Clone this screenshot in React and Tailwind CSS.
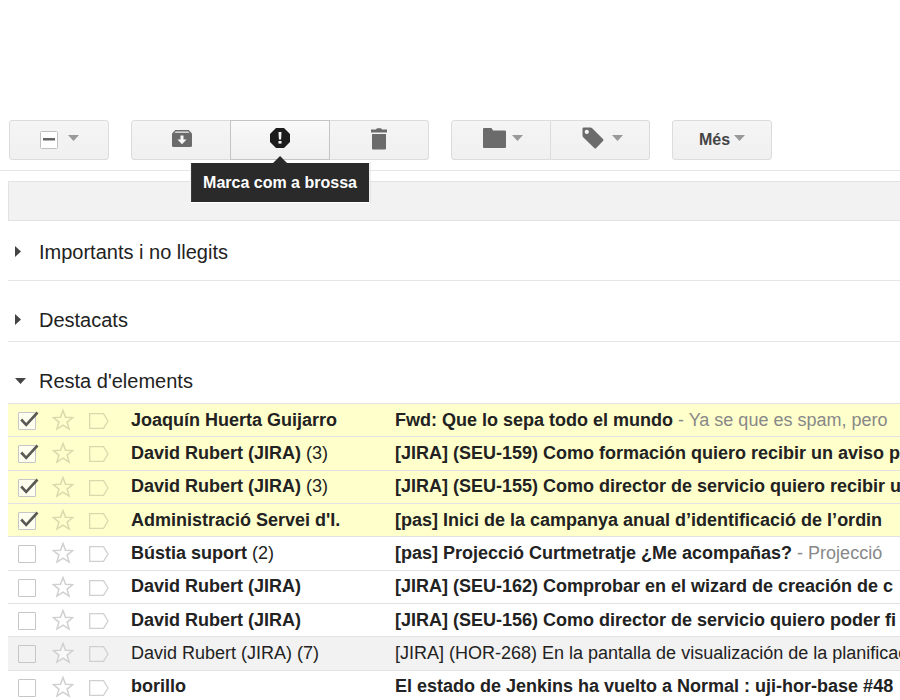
import React, { useState } from "react";

const BUTTON =
  "flex h-10 items-center justify-center border border-[#dcdcdc] bg-linear-to-b from-[#f5f5f5] to-[#f0f0f0] text-[#444]";

function Caret() {
  return (
    <svg width="11" height="6" viewBox="0 0 11 6" className="shrink-0" aria-hidden="true">
      <path d="M0 0h11L5.500 6z" fill="#999" />
    </svg>
  );
}

function ArchiveIcon() {
  return (
    <svg width="20" height="18" viewBox="0 0 20 18" aria-hidden="true">
      <path d="M3.200 0h13.600L20 3.400V15.500q0 1.500-1.500 1.500H1.500Q0 17 0 15.500V3.400z" fill="#6b6b6b" />
      <path d="M3.600 1.500h12.800l1.100 1.300H2.500z" fill="#f3f3f3" />
      <path d="M8.500 5.500h3V9.500h3L10 14.200 5.500 9.500h3z" fill="#f8f8f8" />
    </svg>
  );
}

function SpamIcon() {
  return (
    <svg width="20" height="20" viewBox="0 0 20 20" aria-hidden="true">
      <path d="M6 0h8l6 6v8l-6 6H6l-6-6V6z" fill="#1c1c1c" />
      <path d="M8.500 4h3l-.4 7.500H8.900z" fill="#f3f3f3" />
      <rect x="8.500" y="13" width="3" height="2.600" fill="#f3f3f3" />
    </svg>
  );
}

function TrashIcon() {
  return (
    <svg width="18" height="22" viewBox="0 0 18 22" aria-hidden="true">
      <path d="M1 1.500h5L7 .3h4l1 1.200h5V4.500H1z" fill="#6b6b6b" />
      <path d="M2 6h14v14.200q0 1.300-1.300 1.300H3.300Q2 21.500 2 20.200z" fill="#6b6b6b" />
    </svg>
  );
}

function FolderIcon() {
  return (
    <svg width="23" height="20" viewBox="0 0 23 20" aria-hidden="true">
      <path d="M1 0H8.500l1.500 2.500h12Q23 2.500 23 3.500v15.500q0 1-1 1H1q-1 0-1-1V1Q0 0 1 0z" fill="#6b6b6b" />
    </svg>
  );
}

function TagIcon() {
  return (
    <svg width="22" height="22" viewBox="0 0 22 22" aria-hidden="true">
      <path
        fillRule="evenodd"
        d="M1.800.5H8.500q1 0 1.700.7L21 12q1 1 0 2l-6.800 7q-1 1-2 0L1.200 10.200Q.500 9.500.500 8.500V1.800Q.500.500 1.800.500zM4.800 2.800a2.100 2.100 0 1 0 .01 0z"
        fill="#6b6b6b"
      />
    </svg>
  );
}

function Toolbar() {
  return (
    <div className="flex gap-[22px] border-b border-[#e5e5e5] pb-[10px] pl-[9px]" role="toolbar">
      <button type="button" aria-label="Selecciona" className={`${BUTTON} w-[100px] gap-[10px] rounded-[3px]`}>
        <svg width="18" height="18" viewBox="0 0 18 18" aria-hidden="true">
          <rect x="0.500" y="0.500" width="17" height="17" rx="1" fill="#fff" stroke="#c0c0c0" />
          <rect x="3" y="7" width="12" height="2.500" fill="#666" />
        </svg>
        <span className="pb-1">
          <Caret />
        </span>
      </button>

      <div className="flex">
        <button type="button" aria-label="Arxiva" className={`${BUTTON} w-[100px] rounded-l-[3px] pb-0.5 pl-0.5`}>
          <ArchiveIcon />
        </button>
        <div className="relative -ml-px">
          <button
            type="button"
            aria-describedby="spam-tip"
            aria-label="Marca com a brossa"
            className="flex h-10 w-[100px] items-center justify-center border border-[#c4c4c4] bg-linear-to-b from-[#f9f9f9] to-[#f0f0f0] pb-1"
          >
            <SpamIcon />
          </button>
          <div
            id="spam-tip"
            role="tooltip"
            className="absolute top-[42px] left-1/2 z-10 -translate-x-1/2 border border-white bg-[#2a2a2a] px-3 py-2 text-[16px] leading-[23px] font-bold whitespace-nowrap text-white"
          >
            <svg
              width="14"
              height="7"
              viewBox="0 0 14 7"
              className="absolute bottom-full left-1/2 -translate-x-1/2"
              aria-hidden="true"
            >
              <path d="M0 7l7-7 7 7z" fill="#2a2a2a" />
            </svg>
            Marca com a brossa
          </div>
        </div>
        <button
          type="button"
          aria-label="Suprimeix"
          className={`${BUTTON} w-[99px] rounded-r-[3px] border-l-0 pb-0.5`}
        >
          <TrashIcon />
        </button>
      </div>

      <div className="flex">
        <button type="button" aria-label="Mou a" className={`${BUTTON} w-[100px] gap-[6px] rounded-l-[3px] pb-1 pl-1`}>
          <FolderIcon />
          <Caret />
        </button>
        <button
          type="button"
          aria-label="Etiquetes"
          className={`${BUTTON} w-[99px] gap-[8px] rounded-r-[3px] border-l-0 pb-1 pl-1`}
        >
          <TagIcon />
          <Caret />
        </button>
      </div>

      <button type="button" className={`${BUTTON} w-[100px] gap-1 rounded-[3px] text-[16px] font-bold`}>
        Més
        <span className="pb-1">
          <Caret />
        </span>
      </button>
    </div>
  );
}

function SectionHeader({ title, open, className }) {
  return (
    <h2 className={className}>
      <button type="button" aria-expanded={open} className="flex h-full w-full items-center pl-[7px] text-left text-[20px]">
        <span className="flex w-6">
          {open ? (
            <svg width="11" height="6" viewBox="0 0 11 6" aria-hidden="true">
              <path d="M0 0h11L5.500 6z" fill="#444" />
            </svg>
          ) : (
            <svg width="6" height="11" viewBox="0 0 6 11" aria-hidden="true">
              <path d="M0 0v11L6 5.500z" fill="#444" />
            </svg>
          )}
        </span>
        {title}
      </button>
    </h2>
  );
}

const MAILS = [
  { from: "Joaquín Huerta Guijarro", subject: "Fwd: Que lo sepa todo el mundo", snippet: "Ya se que es spam, pero", checked: true },
  { from: "David Rubert (JIRA)", count: 3, subject: "[JIRA] (SEU-159) Como formación quiero recibir un aviso p", checked: true },
  { from: "David Rubert (JIRA)", count: 3, subject: "[JIRA] (SEU-155) Como director de servicio quiero recibir u", checked: true },
  { from: "Administració Servei d'I.", subject: "[pas] Inici de la campanya anual d’identificació de l’ordin", checked: true },
  { from: "Bústia suport", count: 2, subject: "[pas] Projecció Curtmetratje ¿Me acompañas?", snippet: "Projecció" },
  { from: "David Rubert (JIRA)", subject: "[JIRA] (SEU-162) Comprobar en el wizard de creación de c" },
  { from: "David Rubert (JIRA)", subject: "[JIRA] (SEU-156) Como director de servicio quiero poder fi" },
  { from: "David Rubert (JIRA)", count: 7, subject: "[JIRA] (HOR-268) En la pantalla de visualización de la planificac", read: true },
  { from: "borillo", subject: "El estado de Jenkins ha vuelto a Normal : uji-hor-base #48" },
];

function MailRow({ mail }) {
  const [checked, setChecked] = useState(Boolean(mail.checked));
  const tone = checked ? "bg-[#ffffcc]" : mail.read ? "bg-[#f2f2f2]" : "bg-white";
  const line = checked ? "#d9d9ae" : "#d0d0d0";
  const weight = mail.read ? "font-normal" : "font-bold";
  return (
    <li className={`flex items-center overflow-hidden border-t border-[#e2e2e2] pl-[10px] text-[18px] whitespace-nowrap ${tone}`}>
      <span className="mt-0.5 grid w-[34px] shrink-0 items-center">
        <input
          type="checkbox"
          aria-label={mail.from}
          checked={checked}
          onChange={() => setChecked(!checked)}
          className={`col-start-1 row-start-1 size-[18px] appearance-none rounded-[1px] border border-[#c6c6c6] ${
            checked ? "bg-[#fffff0]" : "bg-transparent"
          }`}
        />
        {checked && (
          <svg
            width="22"
            height="22"
            viewBox="0 0 22 22"
            className="pointer-events-none col-start-1 row-start-1"
            aria-hidden="true"
          >
            <path d="M3.200 9.500l5 5.300L19.500 2.500" fill="none" stroke="#5a5a55" strokeWidth="2.600" />
          </svg>
        )}
      </span>
      <button type="button" aria-label="Destaca" className="w-[37px] shrink-0">
        <svg width="22" height="22" viewBox="0 0 22 22" aria-hidden="true">
          <path
            d="M11 1.500l2.500 6.800 7.300.3-5.700 4.500 2 7L11 16.100l-6.100 4 2-7L1.200 8.600l7.300-.3z"
            fill={checked ? "none" : "#fff"}
            fillOpacity="0.500"
            stroke={line}
            strokeWidth="1.500"
          />
        </svg>
      </button>
      <button type="button" aria-label="Importància" className="mt-0.5 w-[42px] shrink-0">
        <svg width="20" height="16" viewBox="0 0 20 16" aria-hidden="true">
          <path d="M0.700 0.700h13.800L19 8l-4.500 7.300H0.700z" fill="none" stroke={line} strokeWidth="1.300" />
        </svg>
      </button>
      <span className="w-[264px] shrink-0">
        <span className={weight}>{mail.from}</span>
        {mail.count && ` (${mail.count})`}
      </span>
      <span className="min-w-0 flex-1 overflow-hidden">
        <span className={weight}>{mail.subject}</span>
        {mail.snippet && <span className="text-[#888]"> - {mail.snippet}</span>}
      </span>
    </li>
  );
}

export default function App() {
  return (
    <main className="h-screen overflow-hidden bg-white pt-[120px] font-['Liberation_Sans',Arial,sans-serif] text-[#222]">
      <Toolbar />
      <div className="pt-[10px] pl-2">
        <div className="h-10 border border-r-0 border-[#e2e2e2] bg-[#f2f2f2]" />
        <SectionHeader title="Importants i no llegits" className="h-[60px] border-b border-[#e5e5e5] pt-0.5" />
        <SectionHeader title="Destacats" className="h-[61px] border-b border-[#e5e5e5] pt-[17px]" />
        <SectionHeader title="Resta d'elements" open className="h-[61px] pt-[17px]" />
        <ul className="grid h-[300px] auto-rows-fr">
          {MAILS.map((mail, i) => (
            <MailRow key={i} mail={mail} />
          ))}
        </ul>
      </div>
    </main>
  );
}
